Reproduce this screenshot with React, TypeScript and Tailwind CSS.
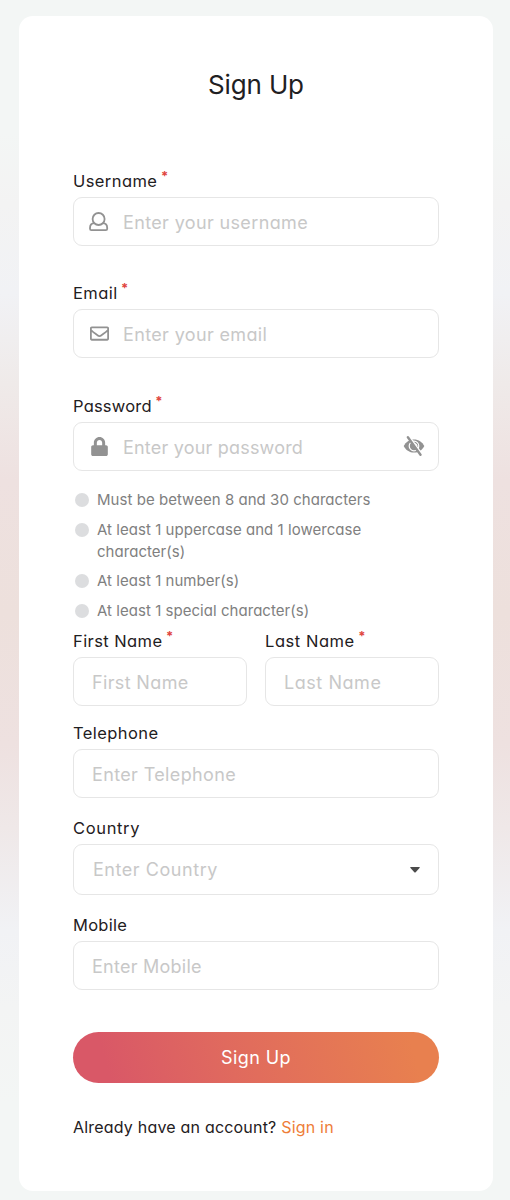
import type { ReactNode } from "react";
import { FaLock, FaRegEnvelope } from "react-icons/fa";

function UserIcon() {
  return (
    <svg width="20" height="20" viewBox="0 0 20 20" fill="none" stroke="#929292" strokeWidth="1.8" strokeLinejoin="round">
      <circle cx="9.6" cy="7" r="6" />
      <path d="M5.400 11.200C2.600 11.400 1 13.300 1 16v.8c0 .9.6 1.400 1.400 1.400h14.400c.8 0 1.400-.5 1.400-1.400V16c0-2.700-1.600-4.600-4.400-4.800" />
    </svg>
  );
}

function HiddenEyeIcon() {
  return (
    <svg width="22" height="20" viewBox="0 0 22 20" fill="none" className="-mt-0.5 -mr-[1.5px]">
      <path d="M.7 10C2.8 5.9 6.4 3.4 11 3.4S19.200 5.900 21.300 10C19.200 14.100 15.600 16.600 11 16.600S2.800 14.100.7 10Z" fill="#929292" />
      <circle cx="11" cy="10" r="4.8" stroke="#fff" strokeWidth="1.2" />
      <path d="M11.200 7.300c1.700 0 2.800 1.200 2.800 2.700" stroke="#fff" strokeWidth="1" />
      <path d="M6.200.600 18.600 17.800" stroke="#fff" strokeWidth="2" />
      <path d="M4.900 1.300 17.500 18.700" stroke="#929292" strokeWidth="2.400" strokeLinecap="round" />
    </svg>
  );
}

type FieldProps = {
  label: string;
  placeholder: string;
  required?: boolean;
  type?: string;
  icon?: ReactNode;
  trailing?: ReactNode;
  className?: string;
  spacing?: string;
};

function Label({ text, required, spacing = "tracking-[0.42px]" }: { text: string; required?: boolean; spacing?: string }) {
  return (
    <span className={`mb-1 flex h-6 items-center text-[16.5px] leading-6 text-[#1f2022] ${spacing}`}>
      {text}
      {required && <span className="ml-[3.5px] h-6 text-[13px] leading-[15px] font-bold tracking-normal text-[#e0453f]">*</span>}
    </span>
  );
}

function Field({ label, placeholder, required, type = "text", icon, trailing, className = "", spacing }: FieldProps) {
  return (
    <label className={`block min-w-0 ${className}`}>
      <Label text={label} required={required} spacing={spacing} />
      <span className="flex h-[49px] items-center rounded-[9px] border border-[#e6e6e6] bg-white px-[15px]">
        {icon && <span className="mr-3.5 flex w-5 shrink-0 justify-center text-[#929292]">{icon}</span>}
        <input
          type={type}
          placeholder={placeholder}
          className={`h-full min-w-0 flex-1 bg-transparent pt-px text-[18px] outline-none placeholder:text-[#c8c8c8] ${spacing ?? "tracking-[0.36px]"} ${icon ? "" : "pl-[3px]"}`}
        />
        {trailing}
      </span>
    </label>
  );
}

const rules = [
  "Must be between 8 and 30 characters",
  "At least 1 uppercase and 1 lowercase character(s)",
  "At least 1 number(s)",
  "At least 1 special character(s)",
];

export default function App() {
  return (
    <main className="h-[1200px] w-full bg-[linear-gradient(180deg,#f3f6f5_0%,#f3f6f5_11%,#f3f3f3_17%,#f1f2f5_24.500%,#efeae9_32%,#eee1e0_40%,#ede0dc_51%,#eee1e0_62%,#efe8e8_69%,#f1f2f5_77.500%,#f3f4f4_84%,#f3f6f5_92%)] pr-[17px] pl-[19px] pt-4 font-['Inter','Noto_Sans',sans-serif] [font-feature-settings:'cv11']">
      <form className="flex h-[1175px] flex-col rounded-[14px] bg-white px-[54px] pt-[51px]">
        <h1 className="mb-[66px] text-center text-[26px] leading-9 tracking-[-0.15px] text-[#1f2022]">Sign Up</h1>
        <Field label="Username" placeholder="Enter your username" required icon={<UserIcon />} className="mb-[35px]" />
        <Field label="Email" placeholder="Enter your email" required icon={<FaRegEnvelope size={19} />} className="mb-9" />
        <Field
          label="Password"
          placeholder="Enter your password"
          required
          type="password"
          icon={<FaLock size={19} />}
          trailing={<HiddenEyeIcon />}
          spacing="tracking-[0.2px]"
          className="mb-[18px]"
        />
        <ul className="mb-[7.5px] flex flex-col gap-[7.5px] pl-0.5">
          {rules.map((rule) => (
            <li key={rule} className="flex gap-2 text-[15px] leading-[22px] tracking-[0.04px] text-[#808080]">
              <span className="mt-1 size-3.5 shrink-0 rounded-full bg-[#dcdddf]" />
              <span className="w-[285px]">{rule}</span>
            </li>
          ))}
        </ul>
        <div className="mb-[15px] grid grid-cols-2 gap-[18px]">
          <Field label="First Name" placeholder="First Name" required />
          <Field label="Last Name" placeholder="Last Name" required spacing="tracking-[0.55px]" />
        </div>
        <Field label="Telephone" placeholder="Enter Telephone" className="mb-[18px]" />
        <div className="mb-[18px]">
          <Label text="Country" spacing="tracking-[0.65px]" />
          <button type="button" className="flex h-[51px] w-full items-center justify-between rounded-[9px] border border-[#e6e6e6] pr-[18px] pl-[19px] text-[18px] tracking-[0.55px] text-[#c8c8c8]">
            Enter Country
            <svg width="10" height="6" viewBox="0 0 10 6" fill="#4b4b4b">
              <path d="M.8 0h8.400q1.100.2.3 1.100L5.700 5.200q-.7.600-1.400 0L.5 1.100Q-.3.200.8 0Z" />
            </svg>
          </button>
        </div>
        <Field label="Mobile" placeholder="Enter Mobile" spacing="tracking-[0.25px]" className="mb-[42px]" />
        <button type="submit" className="h-[51px] w-full shrink-0 rounded-full bg-[linear-gradient(75deg,#d95867_10%,#e06a5e_43%,#e8804f_92%)] text-[18px] tracking-[0.4px] text-white">
          Sign Up
        </button>
        <p className="mt-8 text-[16px] leading-6 tracking-[0.2px] text-[#1f2022]">
          Already have an account? <a className="text-[#ee7d38]">Sign in</a>
        </p>
      </form>
    </main>
  );
}
